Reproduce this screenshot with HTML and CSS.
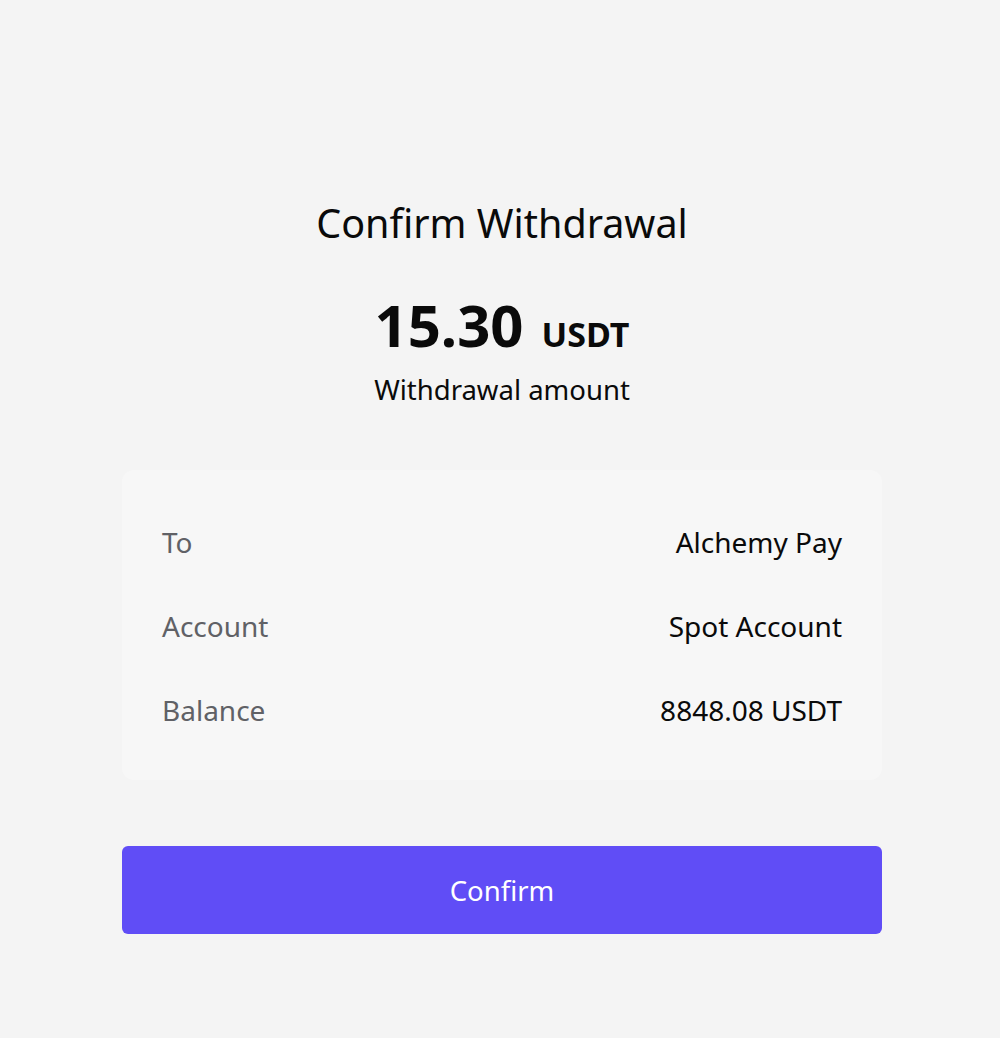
FILE: index.html
```html
<!DOCTYPE html>
<html lang="en">
<head>
<meta charset="utf-8">
<title>Confirm Withdrawal</title>
<link rel="stylesheet" href="styles.css">
</head>
<body>
<main class="sheet">
  <h1 class="title">Confirm Withdrawal</h1>
  <div class="amount"><span class="amount-value">15.30</span><span class="amount-unit">USDT</span></div>
  <div class="amount-label">Withdrawal amount</div>
  <section class="card">
    <div class="row"><span class="label">To</span><span class="value">Alchemy Pay</span></div>
    <div class="row"><span class="label">Account</span><span class="value">Spot Account</span></div>
    <div class="row"><span class="label">Balance</span><span class="value">8848.08 USDT</span></div>
  </section>
  <button class="confirm" type="button">Confirm</button>
</main>
</body>
</html>
```

FILE: styles.css
```css
html, body {
  margin: 0;
  padding: 0;
  background: #f4f4f4;
}
body {
  font-family: "Noto Sans", "Open Sans", sans-serif;
  color: #0a0a0a;
  padding-left: 4px;
}
.sheet {
  width: 760px;
  margin: 0 auto;
  padding-top: 198px;
  display: flex;
  flex-direction: column;
  align-items: stretch;
  text-align: center;
}
.title {
  margin: 0;
  font-size: 39.5px;
  line-height: 50px;
  font-weight: 400;
}
.amount {
  margin-top: 42px;
  height: 70px;
  line-height: 70px;
}
.amount-value {
  font-size: 58px;
  font-weight: 700;
}
.amount-unit {
  font-size: 34px;
  font-weight: 700;
  margin-left: 18px;
}
.amount-label {
  margin-top: 12px;
  font-size: 27.5px;
  line-height: 36px;
}
.card {
  margin-top: 62px;
  background: #f7f7f7;
  border-radius: 12px;
  padding: 30px 40px 28px;
  display: flex;
  flex-direction: column;
}
.row {
  height: 84px;
  display: flex;
  justify-content: space-between;
  align-items: center;
  font-size: 28px;
}
.label {
  color: #606166;
}
.value {
  color: #0a0a0a;
}
.confirm {
  margin-top: 66px;
  height: 88px;
  border: 0;
  border-radius: 6px;
  background: #604df6;
  color: #ffffff;
  font-family: inherit;
  font-size: 27.5px;
  cursor: pointer;
}
```
